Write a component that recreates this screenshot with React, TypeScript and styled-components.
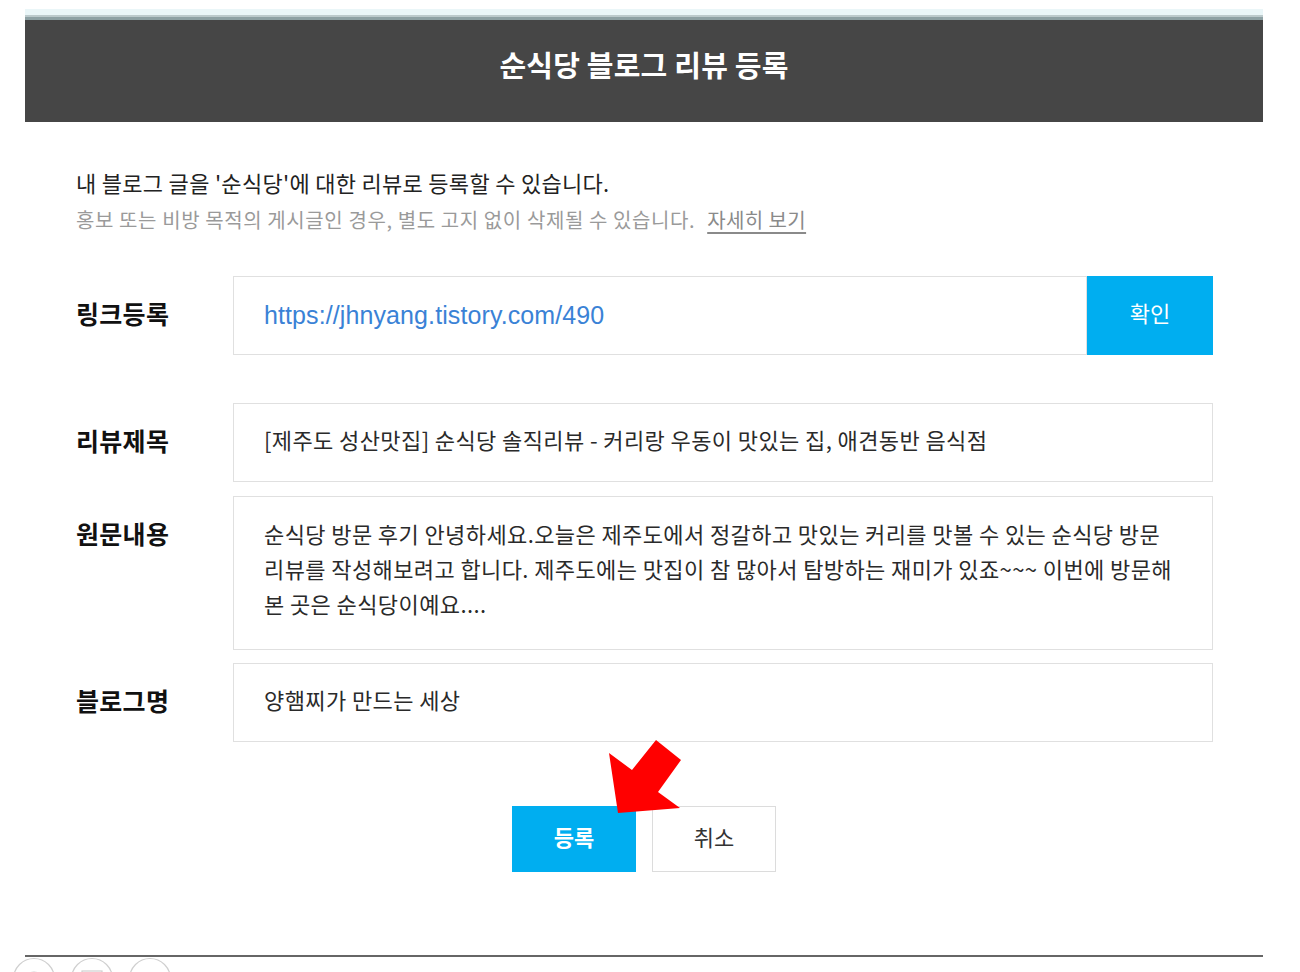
import React from "react";
import styled, { createGlobalStyle } from "styled-components";

const GlobalStyle = createGlobalStyle`
  html, body {
    margin: 0;
    padding: 0;
    background: #ffffff;
    overflow: hidden;
  }
  body {
    font-family: "Noto Sans CJK KR", "Noto Sans", sans-serif;
    color: #222;
  }
  * { box-sizing: border-box; }
`;

const Page = styled.div`
  height: 972px;
  overflow: hidden;
  padding-top: 9px;
`;

const Modal = styled.div`
  width: 1238px;
  margin-left: 25px;
`;

const TopStrip = styled.div`
  height: 11px;
  background: linear-gradient(
    to bottom,
    #eaf6f8 0px,
    #eaf6f8 6px,
    #bccacc 6px,
    #bccacc 8px,
    #8ea1a4 8px,
    #8ea1a4 11px
  );
`;

const Header = styled.header`
  height: 102px;
  background: #464646;
  display: flex;
  align-items: center;
  justify-content: center;
`;

const Title = styled.h1`
  margin: 0;
  color: #ffffff;
  font-size: 29px;
  font-weight: 700;
  letter-spacing: 0.2px;
  padding-bottom: 15px;
`;

const Body = styled.div`
  padding: 41px 50px 0 51px;
`;

const IntroLine = styled.p<{ $muted?: boolean }>`
  margin: 0;
  line-height: 38px;
  font-size: ${(p) => (p.$muted ? "20px" : "22px")};
  color: ${(p) => (p.$muted ? "#9a9a9a" : "#222")};
  letter-spacing: ${(p) => (p.$muted ? "0.6px" : "0.3px")};
  white-space: nowrap;
`;

const MoreLink = styled.a`
  margin-left: 12px;
  color: #8a8a8a;
  letter-spacing: 0.4px;
  text-decoration: underline;
  text-underline-offset: 4px;
`;

const Form = styled.div`
  margin-top: 37px;
  display: flex;
  flex-direction: column;
`;

const Row = styled.div<{ $gap: number }>`
  display: grid;
  grid-template-columns: 157px 1fr;
  margin-top: ${(p) => p.$gap}px;
`;

const Label = styled.div`
  font-size: 25px;
  font-weight: 700;
  color: #111;
  line-height: 74px;
  letter-spacing: 0.3px;
  align-self: start;
`;

const LinkGroup = styled.div`
  display: flex;
  height: 79px;
`;

const Field = styled.div<{ $multi?: boolean }>`
  flex: 1;
  border: 1px solid #e0e0e0;
  min-height: 79px;
  padding: ${(p) => (p.$multi ? "19px 20px 28px 30px" : "0 20px 6px 30px")};
  display: flex;
  flex-direction: column;
  justify-content: ${(p) => (p.$multi ? "flex-start" : "center")};
  font-size: 22px;
  color: #2a2a2a;
  letter-spacing: 0.4px;
`;

const UrlText = styled.span`
  font-family: "Liberation Sans", Arial, sans-serif;
  font-size: 25px;
  color: #3a82d6;
  letter-spacing: 0.1px;
  padding-top: 5px;
`;

const TextLine = styled.span`
  display: block;
  line-height: 35px;
  white-space: nowrap;
`;

const SingleText = styled.span`
  white-space: nowrap;
  line-height: 35px;
`;

const ConfirmButton = styled.button`
  width: 126px;
  border: none;
  background: #00aef0;
  color: #ffffff;
  font-family: inherit;
  font-size: 22px;
  padding: 0 0 7px;
  cursor: pointer;
`;

const Actions = styled.div`
  position: relative;
  margin-top: 64px;
  display: flex;
  justify-content: center;
  gap: 16px;
`;

const ActionButton = styled.button<{ $primary?: boolean }>`
  width: 124px;
  height: 66px;
  font-family: inherit;
  font-size: 22px;
  font-weight: ${(p) => (p.$primary ? 700 : 400)};
  color: ${(p) => (p.$primary ? "#ffffff" : "#333")};
  background: ${(p) => (p.$primary ? "#00aef0" : "#ffffff")};
  border: ${(p) => (p.$primary ? "none" : "1px solid #dcdcdc")};
  padding: 0 0 6px;
  cursor: pointer;
`;

const ArrowSvg = styled.svg`
  position: absolute;
  left: 584px;
  top: -66px;
  pointer-events: none;
`;

const BottomLine = styled.div`
  margin-top: 83px;
  height: 2px;
  background: #666;
`;

const IconRow = styled.div`
  display: flex;
  gap: 14px;
  padding-left: 12px;
`;

const CircleIcon = styled.svg`
  display: block;
`;

const Arrow = () => (
  <ArrowSvg width="90" height="90" viewBox="0 0 90 90">
    <polygon points="9,73 0,13 23,30 47,0 72,20 49,52 71,68" fill="#ff0000" />
  </ArrowSvg>
);

export default function App() {
  return (
    <>
      <GlobalStyle />
      <Page>
        <Modal>
          <TopStrip />
          <Header>
            <Title>순식당 블로그 리뷰 등록</Title>
          </Header>
          <Body>
            <IntroLine>내 블로그 글을 '순식당'에 대한 리뷰로 등록할 수 있습니다.</IntroLine>
            <IntroLine $muted>
              홍보 또는 비방 목적의 게시글인 경우, 별도 고지 없이 삭제될 수 있습니다.
              <MoreLink href="#">자세히 보기</MoreLink>
            </IntroLine>
            <Form>
              <Row $gap={0}>
                <Label>링크등록</Label>
                <LinkGroup>
                  <Field>
                    <UrlText>https://jhnyang.tistory.com/490</UrlText>
                  </Field>
                  <ConfirmButton>확인</ConfirmButton>
                </LinkGroup>
              </Row>
              <Row $gap={48}>
                <Label>리뷰제목</Label>
                <Field>
                  <SingleText>[제주도 성산맛집] 순식당 솔직리뷰 - 커리랑 우동이 맛있는 집, 애견동반 음식점</SingleText>
                </Field>
              </Row>
              <Row $gap={14}>
                <Label>원문내용</Label>
                <Field $multi>
                  <TextLine>순식당 방문 후기 안녕하세요.오늘은 제주도에서 정갈하고 맛있는 커리를 맛볼 수 있는 순식당 방문</TextLine>
                  <TextLine>리뷰를 작성해보려고 합니다. 제주도에는 맛집이 참 많아서 탐방하는 재미가 있죠~~~ 이번에 방문해</TextLine>
                  <TextLine>본 곳은 순식당이예요....</TextLine>
                </Field>
              </Row>
              <Row $gap={13}>
                <Label>블로그명</Label>
                <Field>
                  <SingleText>양햄찌가 만드는 세상</SingleText>
                </Field>
              </Row>
            </Form>
          </Body>
          <Actions>
            <ActionButton $primary>등록</ActionButton>
            <ActionButton>취소</ActionButton>
            <Arrow />
          </Actions>
          <BottomLine />
        </Modal>
        <IconRow>
          <CircleIcon width="44" height="44" viewBox="0 0 44 44">
            <circle cx="22" cy="22" r="20.5" fill="none" stroke="#cfcfcf" strokeWidth="1.2" />
            <circle cx="22" cy="24" r="9" fill="none" stroke="#cfcfcf" strokeWidth="1.2" />
            <circle cx="22" cy="24" r="5" fill="none" stroke="#cfcfcf" strokeWidth="1.2" />
          </CircleIcon>
          <CircleIcon width="44" height="44" viewBox="0 0 44 44">
            <circle cx="22" cy="22" r="20.5" fill="none" stroke="#cfcfcf" strokeWidth="1.2" />
            <rect x="12" y="14" width="20" height="16" fill="none" stroke="#cfcfcf" strokeWidth="1.2" />
          </CircleIcon>
          <CircleIcon width="44" height="44" viewBox="0 0 44 44">
            <circle cx="22" cy="22" r="20.5" fill="none" stroke="#cfcfcf" strokeWidth="1.2" />
          </CircleIcon>
        </IconRow>
      </Page>
    </>
  );
}
